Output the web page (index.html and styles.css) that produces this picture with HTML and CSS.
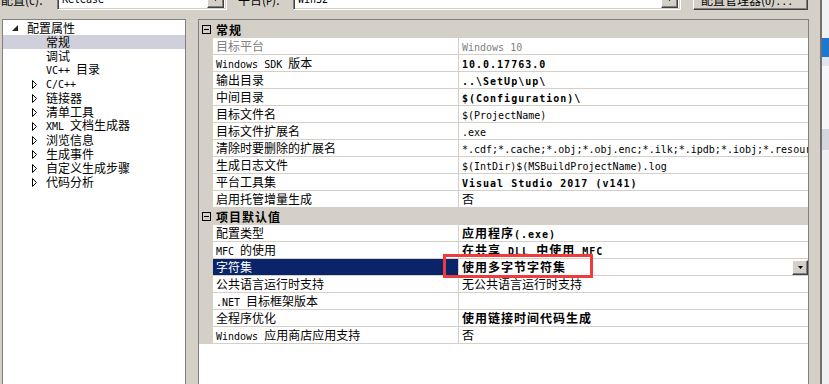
FILE: index.html
```html
<!DOCTYPE html>
<html lang="zh-CN">
<head>
<meta charset="utf-8">
<title>属性页</title>
<link rel="stylesheet" href="styles.css">
</head>
<body>
<div class="dialog">
  <div class="topbar">
    <span class="lbl">配置(<span class="l">C</span>):</span>
    <div class="combo c1"><span class="l">Release</span><span class="ddbtn"><svg width="5" height="3" viewBox="0 0 5 3"><polygon points="0,0 5,0 2.5,3"/></svg></span></div>
    <span class="lbl lbl2">平台(<span class="l">P</span>):</span>
    <div class="combo c2"><span class="l">Win32</span><span class="ddbtn"><svg width="5" height="3" viewBox="0 0 5 3"><polygon points="0,0 5,0 2.5,3"/></svg></span></div>
    <button class="btn">配置管理器(<span class="l">O</span>)<span class="l">...</span></button>
  </div>
  <div class="main">
    <div class="tree">
      <div class="tr l0"><span class="exp0"><svg width="6" height="6" viewBox="0 0 6 6"><polygon points="6,0 6,6 0,6"/></svg></span><span class="t">配置属性</span></div>
      <div class="tr leaf sel"><span class="t">常规</span></div>
      <div class="tr leaf"><span class="t">调试</span></div>
      <div class="tr leaf"><span class="t"><span class="l">VC++ </span>目录</span></div>
      <div class="tr l1"><span class="exp1"><svg width="5" height="9" viewBox="0 0 5 9"><polygon points="0.5,0.5 4.5,4.5 0.5,8.5"/></svg></span><span class="t"><span class="l">C/C++</span></span></div>
      <div class="tr l1"><span class="exp1"><svg width="5" height="9" viewBox="0 0 5 9"><polygon points="0.5,0.5 4.5,4.5 0.5,8.5"/></svg></span><span class="t">链接器</span></div>
      <div class="tr l1"><span class="exp1"><svg width="5" height="9" viewBox="0 0 5 9"><polygon points="0.5,0.5 4.5,4.5 0.5,8.5"/></svg></span><span class="t">清单工具</span></div>
      <div class="tr l1"><span class="exp1"><svg width="5" height="9" viewBox="0 0 5 9"><polygon points="0.5,0.5 4.5,4.5 0.5,8.5"/></svg></span><span class="t"><span class="l">XML </span>文档生成器</span></div>
      <div class="tr l1"><span class="exp1"><svg width="5" height="9" viewBox="0 0 5 9"><polygon points="0.5,0.5 4.5,4.5 0.5,8.5"/></svg></span><span class="t">浏览信息</span></div>
      <div class="tr l1"><span class="exp1"><svg width="5" height="9" viewBox="0 0 5 9"><polygon points="0.5,0.5 4.5,4.5 0.5,8.5"/></svg></span><span class="t">生成事件</span></div>
      <div class="tr l1"><span class="exp1"><svg width="5" height="9" viewBox="0 0 5 9"><polygon points="0.5,0.5 4.5,4.5 0.5,8.5"/></svg></span><span class="t">自定义生成步骤</span></div>
      <div class="tr l1"><span class="exp1"><svg width="5" height="9" viewBox="0 0 5 9"><polygon points="0.5,0.5 4.5,4.5 0.5,8.5"/></svg></span><span class="t">代码分析</span></div>
    </div>
    <div class="grid">
      <div class="hdr first"><svg class="box" width="9" height="9" viewBox="0 0 9 9"><rect x="0.5" y="0.5" width="8" height="8"/><line x1="2" y1="4.5" x2="7" y2="4.5"/></svg><span>常规</span></div>
      <div class="pr dis"><span class="g"></span><span class="k">目标平台</span><span class="v"><span class="l">Windows 10</span></span></div>
      <div class="pr"><span class="g"></span><span class="k"><span class="l">Windows SDK </span>版本</span><span class="v b"><span class="l">10.0.17763.0</span></span></div>
      <div class="pr"><span class="g"></span><span class="k">输出目录</span><span class="v b"><span class="l">..\SetUp\up\</span></span></div>
      <div class="pr"><span class="g"></span><span class="k">中间目录</span><span class="v b"><span class="l">$(Configuration)\</span></span></div>
      <div class="pr"><span class="g"></span><span class="k">目标文件名</span><span class="v"><span class="l">$(ProjectName)</span></span></div>
      <div class="pr"><span class="g"></span><span class="k">目标文件扩展名</span><span class="v"><span class="l">.exe</span></span></div>
      <div class="pr"><span class="g"></span><span class="k">清除时要删除的扩展名</span><span class="v"><span class="l">*.cdf;*.cache;*.obj;*.obj.enc;*.ilk;*.ipdb;*.iobj;*.resources;*.tlb;*.tli;*.tlh;*.tmp;*.rsp;*.pgc;*.pgd</span></span></div>
      <div class="pr"><span class="g"></span><span class="k">生成日志文件</span><span class="v"><span class="l">$(IntDir)$(MSBuildProjectName).log</span></span></div>
      <div class="pr"><span class="g"></span><span class="k">平台工具集</span><span class="v b"><span class="l">Visual Studio 2017 (v141)</span></span></div>
      <div class="pr"><span class="g"></span><span class="k">启用托管增量生成</span><span class="v">否</span></div>
      <div class="hdr"><svg class="box" width="9" height="9" viewBox="0 0 9 9"><rect x="0.5" y="0.5" width="8" height="8"/><line x1="2" y1="4.5" x2="7" y2="4.5"/></svg><span>项目默认值</span></div>
      <div class="pr"><span class="g"></span><span class="k">配置类型</span><span class="v b">应用程序<span class="l">(.exe)</span></span></div>
      <div class="pr"><span class="g"></span><span class="k"><span class="l">MFC </span>的使用</span><span class="v b">在共享<span class="l"> DLL </span>中使用<span class="l"> MFC</span></span></div>
      <div class="pr sel"><span class="g"></span><span class="k">字符集</span><span class="v b hasdd"><span>使用多字节字符集</span><span class="ddbtn small"><svg width="5" height="3" viewBox="0 0 5 3"><polygon points="0,0 5,0 2.5,3"/></svg></span></span></div>
      <div class="pr"><span class="g"></span><span class="k">公共语言运行时支持</span><span class="v">无公共语言运行时支持</span></div>
      <div class="pr"><span class="g"></span><span class="k"><span class="l">.NET </span>目标框架版本</span><span class="v"></span></div>
      <div class="pr"><span class="g"></span><span class="k">全程序优化</span><span class="v b">使用链接时间代码生成</span></div>
      <div class="pr"><span class="g"></span><span class="k"><span class="l">Windows </span>应用商店应用支持</span><span class="v">否</span></div>
      <div class="mark"></div>
    </div>
  </div>
</div>
<div class="other"></div>
</body>
</html>
```

FILE: styles.css
```css
html, body {
  margin: 0;
  padding: 0;
}
body {
  width: 829px;
  height: 384px;
  overflow: hidden;
  display: flex;
  background: #d4d0c8;
  font-family: "Noto Sans CJK SC", sans-serif;
  font-size: 12px;
  color: #000;
}
.l {
  font-family: "DejaVu Sans Mono", "Liberation Mono", monospace;
  font-size: 10px;
}
.dialog {
  width: 822px;
  box-sizing: border-box;
  border-right: 2px solid #707070;
  display: flex;
  flex-direction: column;
  flex: none;
}
.other {
  width: 7px;
  flex: none;
  background: linear-gradient(to bottom, #f2f2f2 0 38px, #1a78d0 38px 57px, #e4e4ee 57px 66px, #f6f6f9 66px 129px, #d6d6de 129px 150px, #f0f0f2 150px);
}

/* top bar */
.topbar {
  display: flex;
  align-items: center;
  height: 22px;
  margin-top: -12px;
  flex: none;
  white-space: nowrap;
}
.lbl {
  width: 57px;
  padding-left: 1px;
  box-sizing: border-box;
}
.lbl2 {
  margin-left: 10px;
  width: 56px;
}
.combo {
  height: 21px;
  box-sizing: border-box;
  background: #fff;
  border: 1px solid;
  border-color: #808080 #fff #fff #808080;
  box-shadow: inset 1px 1px #404040, inset -1px -1px #d4d0c8;
  display: flex;
  align-items: center;
  padding: 0 2px 0 4px;
}
.c1 { width: 170px; }
.c2 { width: 388px; }
.ddbtn {
  margin-left: auto;
  width: 17px;
  height: 17px;
  box-sizing: border-box;
  background: #d4d0c8;
  border: 1px solid;
  border-color: #fff #404040 #404040 #fff;
  box-shadow: inset -1px -1px #808080;
  display: flex;
  align-items: center;
  justify-content: center;
  flex: none;
}
.ddbtn svg { display: block; fill: #000; }
.ddbtn.small {
  width: 16px;
  height: 15px;
}
.btn {
  margin-left: 12px;
  width: 115px;
  height: 22px;
  box-sizing: border-box;
  background: #d4d0c8;
  border: 1px solid;
  border-color: #fff #404040 #404040 #fff;
  box-shadow: inset -1px -1px #808080;
  font: inherit;
  color: #000;
  padding: 0 0 0 7px;
  text-align: left;
  white-space: nowrap;
}

/* main */
.main {
  display: flex;
  margin-top: 9px;
  flex: none;
}
.tree {
  margin-left: 2px;
  width: 184px;
  height: 380px;
  box-sizing: border-box;
  background: #fff;
  border: 1px solid #808080;
  padding-top: 1px;
  flex: none;
}
.tr {
  height: 14px;
  line-height: 14px;
  display: flex;
  align-items: center;
  white-space: nowrap;
}
.tr .t { white-space: pre; }
.tr.l0 { padding-left: 9px; }
.tr.l1 { padding-left: 29px; }
.tr.leaf { padding-left: 43px; }
.tr.sel { background: #cfd0db; }
.exp0 { width: 15px; display: flex; align-items: center; flex: none; }
.exp0 svg { fill: #222; display: block; }
.exp1 { width: 14px; display: flex; align-items: center; flex: none; }
.exp1 svg { fill: none; stroke: #000; stroke-width: 1; display: block; }

/* property grid */
.grid {
  margin-left: 12px;
  width: 611px;
  height: 380px;
  box-sizing: border-box;
  border: 1px solid #808080;
  background: #fff;
  position: relative;
  flex: none;
}
.hdr {
  display: flex;
  align-items: center;
  height: 17px;
  box-sizing: border-box;
  background: #d4d0c8;
  font-weight: 700;
  letter-spacing: 1px;
  line-height: 16px;
}
.hdr.first {
  height: 18px;
  padding-top: 1px;
}
.hdr .box {
  margin: 0 5px 0 3px;
  display: block;
  fill: none;
  stroke: #000;
  stroke-width: 1;
  flex: none;
}
.pr {
  display: flex;
  height: 17px;
  box-sizing: border-box;
  border-bottom: 1px solid #d4d0c8;
  line-height: 16px;
  white-space: nowrap;
}
.g {
  width: 14px;
  background: #d4d0c8;
  flex: none;
}
.k {
  width: 245px;
  padding-left: 3px;
  box-sizing: border-box;
  overflow: hidden;
  flex: none;
}
.v {
  width: 350px;
  border-left: 1px solid #d4d0c8;
  padding-left: 3px;
  box-sizing: border-box;
  overflow: hidden;
  flex: none;
}
.v.b {
  font-weight: 700;
  letter-spacing: 1px;
}
.v.hasdd {
  display: flex;
  align-items: center;
  padding-right: 0;
}
.pr.dis { color: #808080; }
.pr.sel .k {
  background: #0a246a;
  color: #fff;
}
.mark {
  position: absolute;
  left: 244px;
  top: 234px;
  width: 150px;
  height: 24px;
  box-sizing: border-box;
  border: 3px solid #ee3b3b;
}
```
